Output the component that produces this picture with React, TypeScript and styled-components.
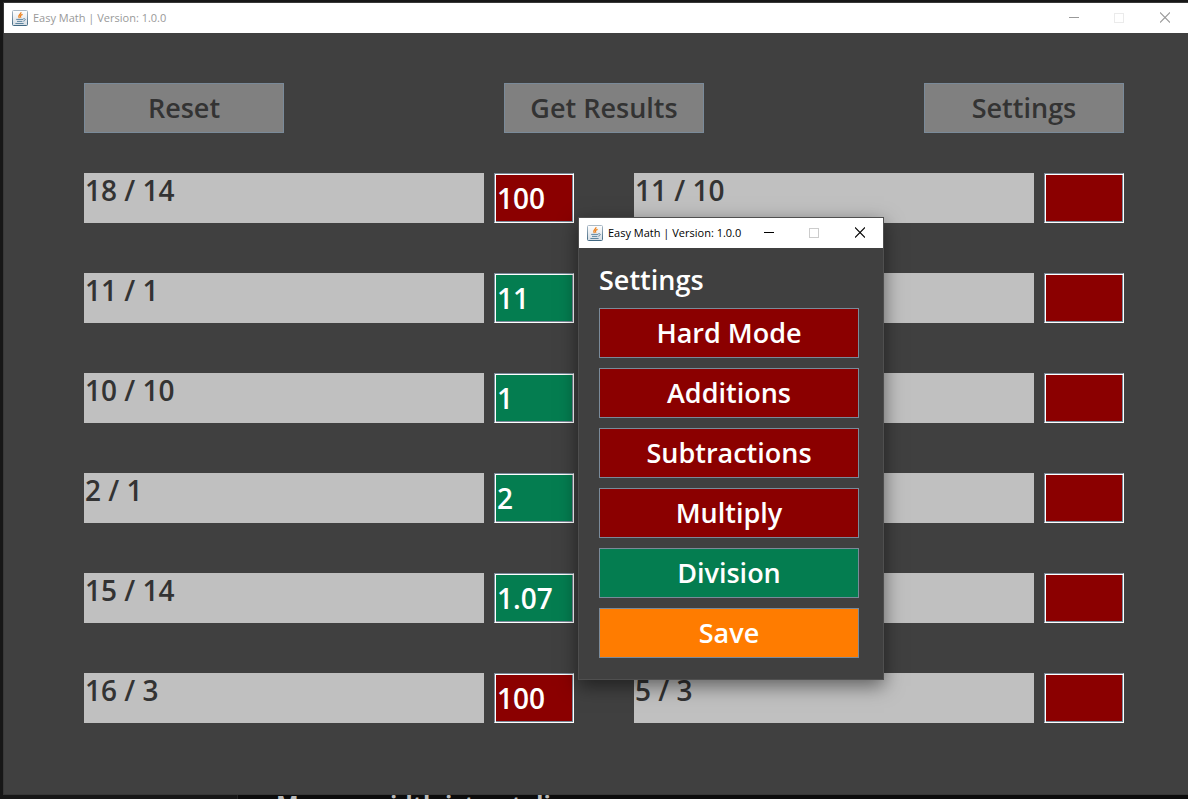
import React, { useState } from "react";
import styled, { createGlobalStyle } from "styled-components";

const GlobalStyle = createGlobalStyle`
  * { box-sizing: border-box; }
  body { margin: 0; background: #171717; font-family: "Open Sans", sans-serif; }
  button, input { font: inherit; }
`;

const colors = {
  panel: "#404040",
  text: "#333333",
  edge: "#7a8a99",
  wrong: "#8b0000",
  right: "#047d50",
  save: "#ff7c00",
};

const Desktop = styled.div`
  position: relative;
  display: flex;
  flex-direction: column;
  height: 100vh;
  overflow: hidden;
  padding: 2px 0 0 3px;
  background: #171717;
`;

const MainWindow = styled.main`
  flex: 1;
  display: flex;
  flex-direction: column;
  min-height: 0;
  background: ${colors.panel};
  border: 1px solid #383838;
  border-right: 0;
`;

const TitleBar = styled.header<{ $active?: boolean }>`
  display: flex;
  align-items: center;
  height: 30px;
  flex: none;
  padding-left: 8px;
  background: #fff;
  color: ${(p) => (p.$active ? "#000" : "#999")};
`;

const Title = styled.span`
  flex: 1;
  min-width: 0;
  margin-left: 5px;
  font-size: 11px;
  line-height: 16px;
  white-space: nowrap;
`;

const WindowButton = styled.button`
  display: grid;
  place-items: center;
  width: 46px;
  height: 30px;
  padding: 0;
  border: 0;
  background: none;
  color: inherit;
`;

const WindowButtons = styled.div<{ $active?: boolean }>`
  display: flex;
  flex: none;
  ${WindowButton}:disabled { color: ${(p) => (p.$active ? "#ccc" : "#ebebeb")}; }
`;

const Board = styled.div`
  flex: 1;
  min-height: 0;
  padding: 50px 64px 0 80px;
`;

const Toolbar = styled.div`
  display: flex;
  justify-content: space-between;
  margin-bottom: 40px;
`;

const ActionButton = styled.button<{ $fill: string; $ink?: string }>`
  height: 50px;
  padding: 0;
  border: 1px solid ${colors.edge};
  background: ${(p) => p.$fill};
  color: ${(p) => p.$ink ?? "#fff"};
  font-size: 27px;
  line-height: 38px;
  font-weight: 650;
`;

const ToolButton = styled(ActionButton)`
  width: 200px;
`;

const Problems = styled.div`
  display: grid;
  grid-template-columns: 1fr 1fr;
  gap: 50px 60px;
`;

const Problem = styled.label`
  display: grid;
  grid-template-columns: 1fr 80px;
  gap: 10px;
  height: 50px;
`;

const Question = styled.span`
  padding-left: 1px;
  background: #c0c0c0;
  color: ${colors.text};
  font-size: 28px;
  line-height: 34px;
  font-weight: 650;
  white-space: nowrap;
`;

const Answer = styled.input<{ $correct: boolean }>`
  width: 100%;
  height: 50px;
  padding: 0 2px;
  border: 1px solid;
  border-color: ${colors.edge} #fff #fff ${colors.edge};
  border-radius: 0;
  outline: 0;
  box-shadow: inset 1px 1px #fff, inset -1px -1px ${colors.edge};
  background: ${(p) => (p.$correct ? colors.right : colors.wrong)};
  color: #fff;
  font-size: 28px;
  font-weight: 650;
`;

const Dialog = styled.section`
  position: absolute;
  left: 578px;
  top: 217px;
  width: 306px;
  border: 1px solid #4f4f4f;
  background: ${colors.panel};
  box-shadow: 0 6px 18px rgba(0, 0, 0, 0.5);
`;

const DialogBody = styled.div`
  display: flex;
  flex-direction: column;
  gap: 10px;
  padding: 14px 24px 21px 20px;
`;

const Heading = styled.h2`
  margin: 0;
  color: #fff;
  font-size: 27px;
  line-height: 36px;
  font-weight: 650;
`;

const Behind = styled.div`
  display: flex;
  flex: none;
  height: 4px;
  overflow: hidden;
  background: #0c0c0c;
`;

const BehindSide = styled.div`
  width: 235px;
  background: #171717;
  border-right: 1px solid #262626;
`;

const BehindText = styled.p`
  margin: 0 0 0 38px;
  color: #bbb;
  font-size: 24px;
  line-height: 17px;
  font-weight: 700;
  white-space: nowrap;
`;

const JavaIcon = () => (
  <svg width="16" height="16" viewBox="0 0 16 16" style={{ flexShrink: 0 }} aria-hidden="true">
    <defs>
      <linearGradient id="cup" x1="0" y1="0" x2="0" y2="1">
        <stop offset="0" stopColor="#fff" />
        <stop offset="1" stopColor="#d5dde4" />
      </linearGradient>
      <linearGradient id="rim" x1="0" y1="0" x2="0" y2="1">
        <stop offset="0" stopColor="#a9b9c6" />
        <stop offset="1" stopColor="#426983" />
      </linearGradient>
    </defs>
    <rect x=".5" y=".5" width="15" height="15" rx="1" fill="url(#cup)" stroke="url(#rim)" />
    <path d="M9 2.2C9.6 4.2 5 5 7.4 8.2M10.6 4.4C8.2 5.3 8 6.2 9 7.8" fill="none" stroke="#ee8422" strokeWidth="1.2" />
    <path d="M4.2 9.4H11M5 11.4H10.4M3.4 13.5H11.6M11.2 8.9C14.4 8 13.6 10.8 11.3 11.2" fill="none" stroke="#5f86a0" strokeWidth="1" />
  </svg>
);

const Controls = ({ active }: { active?: boolean }) => (
  <WindowButtons $active={active}>
    <WindowButton aria-label="Minimize">
      <svg width="12" height="10"><path d="M2 4.5H12" stroke="currentColor" /></svg>
    </WindowButton>
    <WindowButton aria-label="Maximize" disabled>
      <svg width="10" height="10"><rect x=".5" y=".5" width="9" height="9" fill="none" stroke="currentColor" /></svg>
    </WindowButton>
    <WindowButton aria-label="Close">
      <svg width="10" height="12"><path d="M0 .5L10 10.5M10 .5L0 10.5" stroke="currentColor" strokeWidth="1.1" /></svg>
    </WindowButton>
  </WindowButtons>
);

const WindowTitle = ({ active }: { active?: boolean }) => (
  <TitleBar $active={active}>
    <JavaIcon />
    <Title>Easy Math | Version: 1.0.0</Title>
    <Controls active={active} />
  </TitleBar>
);

const problems = [
  { q: "18 / 14", a: "100", ok: false },
  { q: "11 / 10", a: "", ok: false },
  { q: "11 / 1", a: "11", ok: true },
  { q: "", a: "", ok: false },
  { q: "10 / 10", a: "1", ok: true },
  { q: "", a: "", ok: false },
  { q: "2 / 1", a: "2", ok: true },
  { q: "", a: "", ok: false },
  { q: "15 / 14", a: "1.07", ok: true },
  { q: "", a: "", ok: false },
  { q: "16 / 3", a: "100", ok: false },
  { q: "5 / 3", a: "", ok: false },
];

const modes = ["Hard Mode", "Additions", "Subtractions", "Multiply", "Division"];

export default function App() {
  const [enabled, setEnabled] = useState<string[]>(["Division"]);
  const toggle = (mode: string) =>
    setEnabled((on) => (on.includes(mode) ? on.filter((m) => m !== mode) : [...on, mode]));

  return (
    <>
      <GlobalStyle />
      <Desktop>
        <MainWindow>
          <WindowTitle />
          <Board>
            <Toolbar>
              {["Reset", "Get Results", "Settings"].map((name) => (
                <ToolButton key={name} $fill="#808080" $ink={colors.text}>{name}</ToolButton>
              ))}
            </Toolbar>
            <Problems>
              {problems.map((p, i) => (
                <Problem key={i}>
                  <Question>{p.q}</Question>
                  <Answer $correct={p.ok} defaultValue={p.a} />
                </Problem>
              ))}
            </Problems>
          </Board>
        </MainWindow>
        <Behind>
          <BehindSide />
          <BehindText>Many a width ist out di</BehindText>
        </Behind>
        <Dialog role="dialog" aria-label="Settings">
          <WindowTitle active />
          <DialogBody>
            <Heading>Settings</Heading>
            {modes.map((mode) => (
              <ActionButton
                key={mode}
                $fill={enabled.includes(mode) ? colors.right : colors.wrong}
                onClick={() => toggle(mode)}
              >
                {mode}
              </ActionButton>
            ))}
            <ActionButton $fill={colors.save}>Save</ActionButton>
          </DialogBody>
        </Dialog>
      </Desktop>
    </>
  );
}
